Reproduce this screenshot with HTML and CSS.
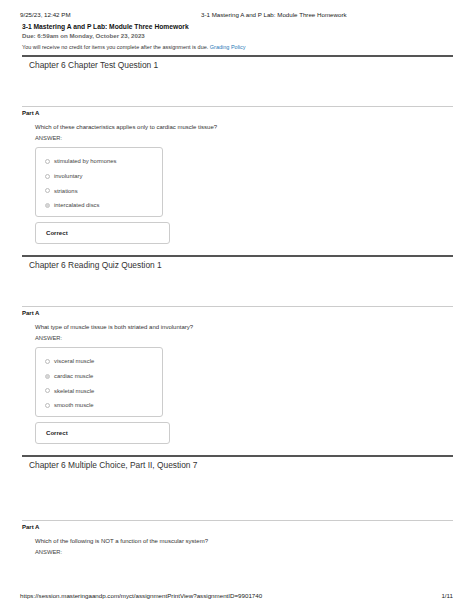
FILE: index.html
```html
<!DOCTYPE html>
<html lang="en">
<head>
    <meta charset="UTF-8">
    <meta name="viewport" content="width=device-width, initial-scale=1.0">
    <title>3-1 Mastering A and P Lab: Module Three Homework</title>
    <link rel="stylesheet" href="styles.css">
</head>
<body>
    <div class="page">
        <div class="printHead">
            <span class="printDate">9/25/23, 12:42 PM</span>
            <span class="printTitle">3-1 Mastering A and P Lab: Module Three Homework</span>
        </div>

        <div class="content">
            <h1 class="assignTitle">3-1 Mastering A and P Lab: Module Three Homework</h1>
            <div class="due">Due: 6:59am on Monday, October 23, 2023</div>
            <div class="notice">You will receive no credit for items you complete after the assignment is due. <a href="" class="link">Grading Policy</a></div>

            <div class="question">
                <h2 class="chapter">Chapter 6 Chapter Test Question 1</h2>
                <div class="part">
                    <div class="partTitle">Part A</div>
                    <div class="partBody">
                        <p class="ask">Which of these characteristics applies only to cardiac muscle tissue?</p>
                        <p class="answerLabel">ANSWER:</p>
                        <ul class="choices">
                            <li class="choice"><span class="radio"></span>stimulated by hormones</li>
                            <li class="choice"><span class="radio"></span>involuntary</li>
                            <li class="choice"><span class="radio"></span>striations</li>
                            <li class="choice"><span class="radio checked"></span>intercalated discs</li>
                        </ul>
                        <div class="result">Correct</div>
                    </div>
                </div>
            </div>

            <div class="question">
                <h2 class="chapter">Chapter 6 Reading Quiz Question 1</h2>
                <div class="part">
                    <div class="partTitle">Part A</div>
                    <div class="partBody">
                        <p class="ask">What type of muscle tissue is both striated and involuntary?</p>
                        <p class="answerLabel">ANSWER:</p>
                        <ul class="choices">
                            <li class="choice"><span class="radio"></span>visceral muscle</li>
                            <li class="choice"><span class="radio checked"></span>cardiac muscle</li>
                            <li class="choice"><span class="radio"></span>skeletal muscle</li>
                            <li class="choice"><span class="radio"></span>smooth muscle</li>
                        </ul>
                        <div class="result">Correct</div>
                    </div>
                </div>
            </div>

            <div class="question last">
                <h2 class="chapter">Chapter 6 Multiple Choice, Part II, Question 7</h2>
                <div class="part">
                    <div class="partTitle">Part A</div>
                    <div class="partBody">
                        <p class="ask">Which of the following is NOT a function of the muscular system?</p>
                        <p class="answerLabel">ANSWER:</p>
                    </div>
                </div>
            </div>
        </div>

        <div class="printFoot">
            <span>https://session.masteringaandp.com/myct/assignmentPrintView?assignmentID=9901740</span>
            <span>1/11</span>
        </div>
    </div>
</body>
</html>
```

FILE: styles.css
```css
*{
    padding: 0;
    margin: 0;
    box-sizing: border-box;
}
body{
    font-family: "Liberation Sans", Arial, sans-serif;
    color: #222;
    background: #fff;
}
ul{
    list-style: none;
}
.page{
    width: 474px;
    height: 613px;
    display: flex;
    flex-direction: column;
    padding: 11px 21px 0 20px;
    overflow: hidden;
}
.printHead{
    display: flex;
    font-size: 6.2px;
    line-height: 8px;
    color: #222;
}
.printDate{
    width: 181px;
}
.content{
    padding-left: 2px;
}
.assignTitle{
    margin-top: 3px;
    font-size: 6.7px;
    line-height: 9px;
    font-weight: bold;
    color: #111;
}
.due{
    margin-top: 1px;
    font-size: 6.15px;
    line-height: 8px;
    font-weight: bold;
    color: #666;
}
.notice{
    margin-top: 4px;
    font-size: 5.5px;
    line-height: 7px;
    color: #333;
}
.link{
    color: #2a7ab8;
    text-decoration: none;
}
.question{
    margin-top: 4px;
    border-top: 2px solid #555;
}
.question + .question{
    margin-top: 11px;
}
.chapter{
    margin-top: 2px;
    padding-left: 7px;
    font-size: 8.4px;
    line-height: 12px;
    font-weight: normal;
    color: #333;
}
.part{
    margin-top: 35px;
    border-top: 1px solid #ccc;
}
.last .part{
    margin-top: 49px;
}
.partTitle{
    margin-top: 2px;
    font-size: 6px;
    line-height: 8px;
    font-weight: bold;
    color: #111;
}
.partBody{
    padding-left: 13px;
}
.ask{
    margin-top: 6px;
    font-size: 6px;
    line-height: 8px;
    color: #333;
}
.answerLabel{
    margin-top: 3px;
    font-size: 5.8px;
    line-height: 8px;
    color: #444;
}
.choices{
    margin-top: 5px;
    width: 128px;
    height: 70px;
    padding: 6px 0 4px 9px;
    border: 1px solid #ccc;
    border-radius: 3px;
}
.choice{
    display: flex;
    align-items: center;
    height: 14.7px;
    font-size: 5.9px;
    color: #444;
}
.radio{
    width: 5px;
    height: 5px;
    margin-right: 4px;
    border: 0.6px solid #bbb;
    border-radius: 50%;
    background: #fff;
}
.radio.checked{
    background: #d6d6d6;
    border-color: #c8c8c8;
}
.result{
    margin-top: 5px;
    width: 135px;
    height: 22px;
    padding-left: 10px;
    border: 1px solid #ccc;
    border-radius: 3px;
    font-size: 6.1px;
    line-height: 20px;
    font-weight: bold;
    color: #222;
}
.printFoot{
    margin-top: auto;
    margin-bottom: 13px;
    display: flex;
    justify-content: space-between;
    font-size: 6.2px;
    line-height: 8px;
    color: #222;
}
```
